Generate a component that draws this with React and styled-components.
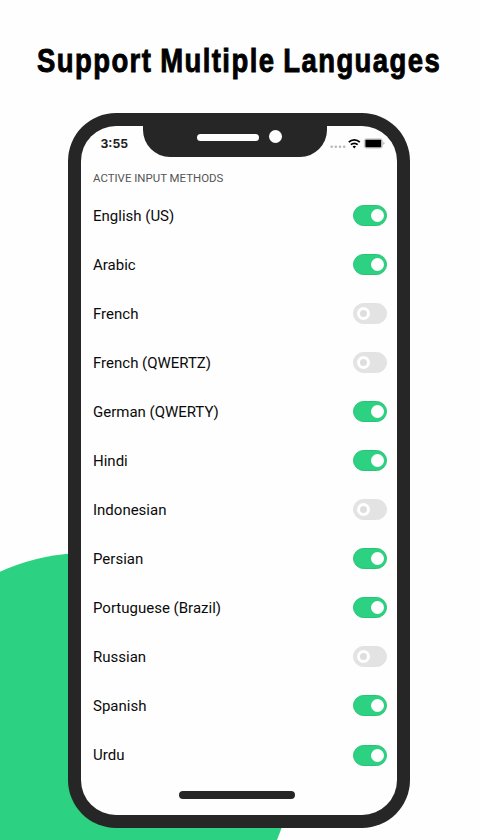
import React from "react";
import styled, { createGlobalStyle } from "styled-components";

const GlobalStyle = createGlobalStyle`
  *, *::before, *::after { box-sizing: border-box; }
  body { margin: 0; background: #fff; }
`;

const Page = styled.main`
  position: relative;
  width: 480px;
  height: 840px;
  overflow: hidden;
  background: #fefefe;
  font-family: Roboto, sans-serif;
  display: flex;
  flex-direction: column;
`;

const Blob = styled.div`
  position: absolute;
  left: -121.5px;
  top: 553px;
  width: 414px;
  height: 414px;
  border-radius: 50%;
  background: #2cd181;
`;

const Title = styled.h1`
  margin: 0;
  height: 113px;
  padding: 40.5px 0 0 37px;
  font: 700 33.5px/40px "Liberation Sans Narrow", "Liberation Sans", sans-serif;
  color: #000;
  white-space: nowrap;
`;

const TitleText = styled.span`
  display: inline-block;
  transform-origin: left center;
  transform: scaleX(0.82);
  letter-spacing: 1.75px;
  word-spacing: -1.5px;
  -webkit-text-stroke: 0.9px #000;
`;

const Phone = styled.section`
  position: relative;
  width: 342px;
  height: 715px;
  margin-left: 68px;
  padding: 13px;
  border-radius: 48px;
  background: #262626;
`;

const Screen = styled.div`
  position: relative;
  height: 689px;
  border-radius: 35px;
  background: #fefefe;
  overflow: hidden;
  display: flex;
  flex-direction: column;
`;

const Notch = styled.div`
  position: absolute;
  left: 62px;
  top: 0;
  width: 184px;
  height: 31px;
  border-radius: 0 0 27px 27px;
  background: #262626;
`;

const Speaker = styled.div`
  position: absolute;
  left: 54px;
  top: 8px;
  width: 62px;
  height: 7px;
  border-radius: 4px;
  background: #fff;
`;

const Camera = styled.div`
  position: absolute;
  left: 126px;
  top: 4px;
  width: 13px;
  height: 13px;
  border-radius: 50%;
  background: #fff;
`;

const StatusBar = styled.header`
  height: 36px;
  padding: 0 12px 0 19.5px;
  display: flex;
  align-items: center;
  justify-content: space-between;
`;

const Time = styled.span`
  font: 700 12.2px/16px Inter, sans-serif;
  color: #222;
`;

const SectionLabel = styled.h2`
  margin: 0;
  height: 29px;
  padding: 8px 12px 0;
  font-size: 11.45px;
  line-height: 16px;
  font-weight: 400;
  color: #555;
  white-space: nowrap;
`;

const List = styled.ul`
  margin: 0;
  padding: 0 10px 0 12px;
  list-style: none;
`;

const Row = styled.li`
  height: 49.05px;
  display: flex;
  align-items: center;
  justify-content: space-between;
  font-size: 15px;
  color: #0b0b0b;
`;

const Toggle = styled.span`
  width: 34px;
  height: 21px;
  padding: 0 2.5px 0 3px;
  border-radius: 11px;
  border: 1px solid ${(p) => (p.$on ? "#25c577" : "#e2e2e2")};
  background: ${(p) => (p.$on ? "#2cd181" : "#e3e3e3")};
  display: flex;
  align-items: center;
  justify-content: ${(p) => (p.$on ? "flex-end" : "flex-start")};
`;

const Knob = styled.span`
  width: 13px;
  height: 13px;
  border-radius: 50%;
  background: ${(p) => (p.$on ? "#fff" : "#dedede")};
  border: 3px solid #fff;
`;

const HomeBar = styled.div`
  width: 116px;
  height: 8px;
  margin: 11px 0 0 98px;
  border-radius: 4px;
  background: #262626;
`;

const languages = [
  ["English (US)", true],
  ["Arabic", true],
  ["French", false],
  ["French (QWERTZ)", false],
  ["German (QWERTY)", true],
  ["Hindi", true],
  ["Indonesian", false],
  ["Persian", true],
  ["Portuguese (Brazil)", true],
  ["Russian", false],
  ["Spanish", true],
  ["Urdu", true],
];

const StatusIcons = () => (
  <svg width="56" height="14" viewBox="0 0 56 14">
    <g fill="#b9b9b9">
      <circle cx="2.7" cy="9.7" r="1.3" />
      <circle cx="6.8" cy="9.7" r="1.3" />
      <circle cx="11" cy="9.7" r="1.3" />
      <circle cx="15.2" cy="9.7" r="1.3" />
    </g>
    <g fill="none" stroke="#000" strokeWidth="1.8">
      <path d="M19.8 5.1a7.8 7.8 0 0 1 11 0" />
      <path d="M21.9 7.7a4.8 4.8 0 0 1 6.8 0" />
    </g>
    <path d="M23.6 9.4a2.7 2.7 0 0 1 3.4 0l-1.7 2z" fill="#000" />
    <rect x="35.3" y="1.8" width="18" height="9.3" rx="1.8" fill="#ddd" stroke="#b8b8b8" strokeWidth=".7" />
    <rect x="36.4" y="2.8" width="15.8" height="7.4" rx=".8" fill="#000" />
    <path d="M54.3 5q1.2.4 1.2 1.4t-1.2 1.4z" fill="#aaa" />
  </svg>
);

export default function App() {
  return (
    <Page>
      <GlobalStyle />
      <Blob />
      <Title>
        <TitleText>Support Multiple Languages</TitleText>
      </Title>
      <Phone>
        <Screen>
          <StatusBar>
            <Time>3:55</Time>
            <StatusIcons />
          </StatusBar>
          <SectionLabel>ACTIVE INPUT METHODS</SectionLabel>
          <List>
            {languages.map(([name, on]) => (
              <Row key={name}>
                {name}
                <Toggle $on={on} role="switch" aria-checked={on} aria-label={name}>
                  <Knob $on={on} />
                </Toggle>
              </Row>
            ))}
          </List>
          <HomeBar />
          <Notch>
            <Speaker />
            <Camera />
          </Notch>
        </Screen>
      </Phone>
    </Page>
  );
}
